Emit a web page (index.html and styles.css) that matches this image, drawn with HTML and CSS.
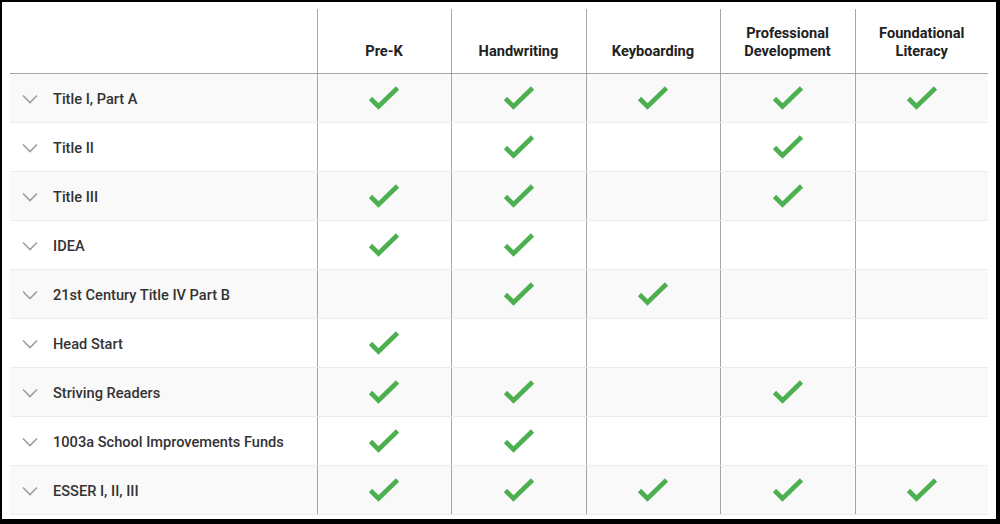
FILE: index.html
```html
<!DOCTYPE html>
<html>
<head>
<meta charset="utf-8">
<link rel="stylesheet" href="styles.css">
</head>
<body>
<svg class="defs" width="0" height="0" aria-hidden="true">
  <symbol id="chev" viewBox="0 0 16 10"><path d="M1 1.5 L8 8.5 L15 1.5" fill="none" stroke="#9e9e9e" stroke-width="1.6"/></symbol>
  <symbol id="check" viewBox="0 0 32 26"><path d="M2.5 13.5 L10.5 21.5 L29.5 3" fill="none" stroke="#4caf50" stroke-width="4.6"/></symbol>
</svg>
<div class="frame">
  <table class="grid">
    <colgroup>
      <col class="c-name"><col class="c-a"><col class="c-b"><col class="c-a"><col class="c-b"><col class="c-c">
    </colgroup>
    <thead>
      <tr>
        <th class="blank"></th>
        <th>Pre-K</th>
        <th>Handwriting</th>
        <th>Keyboarding</th>
        <th>Professional<br>Development</th>
        <th>Foundational<br>Literacy</th>
      </tr>
    </thead>
    <tbody>
      <tr>
        <td class="name"><div class="name-in"><svg class="chev"><use href="#chev"/></svg><span>Title I, Part A</span></div></td>
        <td class="mark"><svg class="check"><use href="#check"/></svg></td>
        <td class="mark"><svg class="check"><use href="#check"/></svg></td>
        <td class="mark"><svg class="check"><use href="#check"/></svg></td>
        <td class="mark"><svg class="check"><use href="#check"/></svg></td>
        <td class="mark"><svg class="check"><use href="#check"/></svg></td>
      </tr>
      <tr>
        <td class="name"><div class="name-in"><svg class="chev"><use href="#chev"/></svg><span>Title II</span></div></td>
        <td class="mark"></td>
        <td class="mark"><svg class="check"><use href="#check"/></svg></td>
        <td class="mark"></td>
        <td class="mark"><svg class="check"><use href="#check"/></svg></td>
        <td class="mark"></td>
      </tr>
      <tr>
        <td class="name"><div class="name-in"><svg class="chev"><use href="#chev"/></svg><span>Title III</span></div></td>
        <td class="mark"><svg class="check"><use href="#check"/></svg></td>
        <td class="mark"><svg class="check"><use href="#check"/></svg></td>
        <td class="mark"></td>
        <td class="mark"><svg class="check"><use href="#check"/></svg></td>
        <td class="mark"></td>
      </tr>
      <tr>
        <td class="name"><div class="name-in"><svg class="chev"><use href="#chev"/></svg><span>IDEA</span></div></td>
        <td class="mark"><svg class="check"><use href="#check"/></svg></td>
        <td class="mark"><svg class="check"><use href="#check"/></svg></td>
        <td class="mark"></td>
        <td class="mark"></td>
        <td class="mark"></td>
      </tr>
      <tr>
        <td class="name"><div class="name-in"><svg class="chev"><use href="#chev"/></svg><span>21st Century Title IV Part B</span></div></td>
        <td class="mark"></td>
        <td class="mark"><svg class="check"><use href="#check"/></svg></td>
        <td class="mark"><svg class="check"><use href="#check"/></svg></td>
        <td class="mark"></td>
        <td class="mark"></td>
      </tr>
      <tr>
        <td class="name"><div class="name-in"><svg class="chev"><use href="#chev"/></svg><span>Head Start</span></div></td>
        <td class="mark"><svg class="check"><use href="#check"/></svg></td>
        <td class="mark"></td>
        <td class="mark"></td>
        <td class="mark"></td>
        <td class="mark"></td>
      </tr>
      <tr>
        <td class="name"><div class="name-in"><svg class="chev"><use href="#chev"/></svg><span>Striving Readers</span></div></td>
        <td class="mark"><svg class="check"><use href="#check"/></svg></td>
        <td class="mark"><svg class="check"><use href="#check"/></svg></td>
        <td class="mark"></td>
        <td class="mark"><svg class="check"><use href="#check"/></svg></td>
        <td class="mark"></td>
      </tr>
      <tr>
        <td class="name"><div class="name-in"><svg class="chev"><use href="#chev"/></svg><span>1003a School Improvements Funds</span></div></td>
        <td class="mark"><svg class="check"><use href="#check"/></svg></td>
        <td class="mark"><svg class="check"><use href="#check"/></svg></td>
        <td class="mark"></td>
        <td class="mark"></td>
        <td class="mark"></td>
      </tr>
      <tr>
        <td class="name"><div class="name-in"><svg class="chev"><use href="#chev"/></svg><span>ESSER I, II, III</span></div></td>
        <td class="mark"><svg class="check"><use href="#check"/></svg></td>
        <td class="mark"><svg class="check"><use href="#check"/></svg></td>
        <td class="mark"><svg class="check"><use href="#check"/></svg></td>
        <td class="mark"><svg class="check"><use href="#check"/></svg></td>
        <td class="mark"><svg class="check"><use href="#check"/></svg></td>
      </tr>
    </tbody>
  </table>
</div>
</body>
</html>
```

FILE: styles.css
```css
html, body {
  margin: 0;
  padding: 0;
  background: #fff;
}
.defs {
  position: absolute;
  width: 0;
  height: 0;
  overflow: hidden;
}
.frame {
  box-sizing: border-box;
  width: 1000px;
  height: 524px;
  border-style: solid;
  border-color: #000;
  border-width: 2px 4px 5px 2px;
  padding: 7px 0 0 8px;
  background: #fff;
  font-family: Roboto, "Liberation Sans", sans-serif;
}
.grid {
  width: 978px;
  table-layout: fixed;
  border-collapse: collapse;
  border-spacing: 0;
}
.c-name { width: 307px; }
.c-a { width: 134px; }
.c-b { width: 135px; }
.c-c { width: 133px; }
.grid th {
  height: 64px;
  padding: 0 0 13px 0;
  box-sizing: border-box;
  vertical-align: bottom;
  font-size: 14.6px;
  line-height: 18px;
  font-weight: 700;
  color: #212121;
  text-align: center;
  border-bottom: 1px solid #a6a6a6;
  border-left: 1px solid #a6a6a6;
}
.grid th.blank {
  border-left: none;
}
.grid td {
  height: 48px;
  padding: 0;
  border-bottom: 1px solid #ececec;
  vertical-align: middle;
}
.grid td.mark {
  border-left: 1px solid #a6a6a6;
  text-align: center;
}
.grid tbody tr:nth-child(odd) td {
  background: #f9f9f9;
}
.name-in {
  display: flex;
  align-items: center;
  gap: 15px;
  padding-left: 12px;
  font-size: 14.6px;
  font-weight: 500;
  color: #333;
  padding-top: 2px;
}
.chev {
  display: block;
  width: 16px;
  height: 10px;
}
.check {
  display: block;
  width: 32px;
  height: 26px;
  margin: 0 auto;
}
```
